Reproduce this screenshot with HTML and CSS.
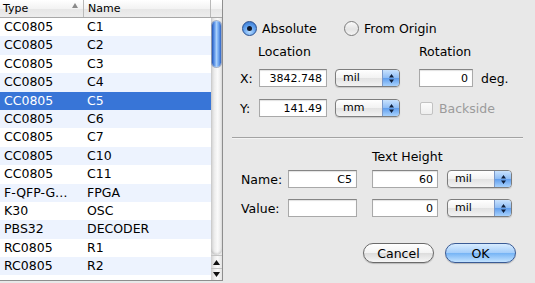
FILE: index.html
```html
<!DOCTYPE html>
<html>
	<head>
		<meta charset="UTF-8">
		<title>Part Properties</title>
		<link rel="stylesheet" href="styles.css">
	</head>
	<body>
		<div class="window">
			<div class="list">
				<div class="list-head">
					<div class="head-type">Type<span class="sort"></span></div>
					<div class="head-name">Name</div>
					<div class="head-corner"></div>
				</div>
				<div class="list-main">
					<div class="rows">
						<div class="row"><span class="c-type">CC0805</span><span class="c-name">C1</span></div>
						<div class="row alt"><span class="c-type">CC0805</span><span class="c-name">C2</span></div>
						<div class="row"><span class="c-type">CC0805</span><span class="c-name">C3</span></div>
						<div class="row alt"><span class="c-type">CC0805</span><span class="c-name">C4</span></div>
						<div class="row sel"><span class="c-type">CC0805</span><span class="c-name">C5</span></div>
						<div class="row alt"><span class="c-type">CC0805</span><span class="c-name">C6</span></div>
						<div class="row"><span class="c-type">CC0805</span><span class="c-name">C7</span></div>
						<div class="row alt"><span class="c-type">CC0805</span><span class="c-name">C10</span></div>
						<div class="row"><span class="c-type">CC0805</span><span class="c-name">C11</span></div>
						<div class="row alt"><span class="c-type">F-QFP-G…</span><span class="c-name">FPGA</span></div>
						<div class="row"><span class="c-type">K30</span><span class="c-name">OSC</span></div>
						<div class="row alt"><span class="c-type">PBS32</span><span class="c-name">DECODER</span></div>
						<div class="row"><span class="c-type">RC0805</span><span class="c-name">R1</span></div>
						<div class="row alt"><span class="c-type">RC0805</span><span class="c-name">R2</span></div>
					</div>
					<div class="vscroll">
						<div class="track"><div class="thumb"></div></div>
						<div class="arrow">
							<svg width="7" height="5" viewBox="0 0 7 5"><path d="M3.5 0L7 5H0z" fill="#111"/></svg>
						</div>
						<div class="arrow down">
							<svg width="7" height="5" viewBox="0 0 7 5"><path d="M0 0H7L3.5 5z" fill="#111"/></svg>
						</div>
					</div>
				</div>
			</div>

			<div class="panel">
				<div class="radios">
					<label class="option"><span class="radio on"></span>Absolute</label>
					<label class="option"><span class="radio"></span>From Origin</label>
				</div>

				<div class="titles">
					<span class="t-location">Location</span>
					<span>Rotation</span>
				</div>

				<div class="line line-x">
					<span class="axis">X:</span>
					<input class="field f-loc" type="text" value="3842.748">
					<div class="popup"><span class="popup-label">mil</span><span class="popup-arrows">
						<svg width="7" height="11" viewBox="0 0 7 11"><path d="M3.5 1L6 4.5H1z M1 6.5H6L3.5 10z" fill="#10203c"/></svg>
					</span></div>
					<input class="field f-rot" type="text" value="0">
					<span class="unit">deg.</span>
				</div>

				<div class="line line-y">
					<span class="axis">Y:</span>
					<input class="field f-loc" type="text" value="141.49">
					<div class="popup"><span class="popup-label">mm</span><span class="popup-arrows">
						<svg width="7" height="11" viewBox="0 0 7 11"><path d="M3.5 1L6 4.5H1z M1 6.5H6L3.5 10z" fill="#10203c"/></svg>
					</span></div>
					<label class="check"><span class="box"></span>Backside</label>
				</div>

				<div class="separator"></div>

				<div class="th-title">Text Height</div>

				<div class="line line-name">
					<span class="tag">Name:</span>
					<input class="field f-text" type="text" value="C5">
					<input class="field f-height" type="text" value="60">
					<div class="popup"><span class="popup-label">mil</span><span class="popup-arrows">
						<svg width="7" height="11" viewBox="0 0 7 11"><path d="M3.5 1L6 4.5H1z M1 6.5H6L3.5 10z" fill="#10203c"/></svg>
					</span></div>
				</div>

				<div class="line line-value">
					<span class="tag">Value:</span>
					<input class="field f-text" type="text" value="">
					<input class="field f-height" type="text" value="0">
					<div class="popup"><span class="popup-label">mil</span><span class="popup-arrows">
						<svg width="7" height="11" viewBox="0 0 7 11"><path d="M3.5 1L6 4.5H1z M1 6.5H6L3.5 10z" fill="#10203c"/></svg>
					</span></div>
				</div>

				<div class="buttons">
					<button class="btn">Cancel</button>
					<button class="btn ok">OK</button>
				</div>
			</div>
		</div>
	</body>
</html>
```

FILE: styles.css
```css
body {
	margin: 0;
	background-color: #e8e8e8;
	font-family: "DejaVu Sans", sans-serif;
	font-size: 12.5px;
	color: #000;
	overflow: hidden;
}
.window {
	display: flex;
	width: 535px;
	height: 283px;
}

/* parts list */
.list {
	width: 222px;
	height: 280px;
	border-right: 1px solid #8e8e8e;
	border-bottom: 1px solid #8e8e8e;
	background-color: #fff;
	display: flex;
	flex-direction: column;
	overflow: hidden;
	flex-shrink: 0;
}
.list-head {
	display: flex;
	height: 17px;
	border-bottom: 1px solid #a8a8a8;
	background: linear-gradient(#ffffff, #f3f3f3 50%, #e6e6e6 51%, #ededed);
	font-size: 11px;
	line-height: 17px;
}
.head-type,.head-name {
	border-right: 1px solid #b9b9b9;
	box-sizing: border-box;
	padding-left: 3px;
}
.head-type {
	width: 84px;
	display: flex;
	align-items: center;
	justify-content: space-between;
	padding-right: 5px;
}
.head-name {
	width: 127px;
	padding-left: 4px;
}
.head-corner {
	flex: 1;
}
.sort {
	width: 0;
	height: 0;
	border-left: 3px solid transparent;
	border-right: 3px solid transparent;
	border-bottom: 5px solid #8a8a8a;
	margin-bottom: 6px;
}
.list-main {
	display: flex;
	flex: 1;
	overflow: hidden;
}
.rows {
	width: 211px;
}
.row {
	display: flex;
	height: 18.4px;
	line-height: 18.4px;
	white-space: nowrap;
}
.row.alt {
	background-color: #edf3fe;
}
.row.sel {
	background-color: #3875d7;
	color: #fff;
}
.c-type {
	width: 84px;
	padding-left: 4px;
	box-sizing: border-box;
}
.c-name {
	padding-left: 3px;
}
.vscroll {
	flex: 1;
	display: flex;
	flex-direction: column;
	background: linear-gradient(to right, #cfcfcf, #ececec 30%, #fafafa 60%, #e4e4e4);
}
.track {
	flex: 1;
	padding-top: 3px;
	border-radius: 0 0 6px 6px;
	box-shadow: inset 0 -2px 2px rgba(0,0,0,0.12);
}
.thumb {
	width: 9px;
	height: 46px;
	margin-left: 1px;
	border-radius: 5px;
	background: linear-gradient(to right, #2457b8, #5b93e8 25%, #a9d0fb 50%, #6aa2ee 75%, #2d63c6);
	box-shadow: 0 0 0 1px rgba(30,60,120,0.35);
}
.arrow {
	height: 12px;
	display: flex;
	align-items: center;
	justify-content: center;
	border-top: 1px solid #c4c4c4;
}
.arrow.down {
	height: 11px;
}

/* right side */
.panel {
	flex: 1;
	display: flex;
	flex-direction: column;
}
.radios {
	display: flex;
	margin: 21px 0 0 19px;
	height: 15px;
}
.option {
	display: flex;
	align-items: center;
	gap: 5px;
	width: 102px;
	white-space: nowrap;
}
.radio {
	width: 13px;
	height: 13px;
	border-radius: 50%;
	border: 1px solid #7b7b7b;
	background: linear-gradient(#fafafa, #e4e4e4 55%, #f4f4f4);
	display: flex;
	align-items: center;
	justify-content: center;
	flex-shrink: 0;
}
.radio.on {
	border-color: #2a4f8e;
	background: radial-gradient(circle at 50% 75%, #b7dcff, #5b9ceb 55%, #2f6dc6);
}
.radio.on::after {
	content: "";
	width: 5px;
	height: 5px;
	border-radius: 50%;
	background-color: #10182a;
}
.titles {
	display: flex;
	margin: 8px 0 0 35px;
	height: 16px;
	line-height: 16px;
}
.t-location {
	width: 161px;
}
.line {
	display: flex;
	align-items: center;
	height: 18px;
}
.line-x {
	margin: 9px 0 0 17px;
}
.line-y {
	margin: 12px 0 0 17px;
}
.axis {
	width: 19px;
}
.field {
	box-sizing: border-box;
	height: 18px;
	margin: 0;
	padding: 0 4px 0 0;
	border: 1px solid #a9a9a9;
	border-top-color: #858585;
	box-shadow: inset 0 1px 1px rgba(0,0,0,0.12);
	background-color: #fff;
	font-family: "DejaVu Sans", sans-serif;
	font-size: 11px;
	text-align: right;
	color: #000;
	outline: none;
}
.f-loc {
	width: 68px;
	margin-right: 8px;
}
.f-rot {
	width: 54px;
	margin-left: 19px;
}
.unit {
	margin-left: 8px;
}
.popup {
	display: flex;
	width: 65px;
	height: 18px;
	box-sizing: border-box;
	border: 1px solid #7d7d7d;
	border-radius: 4px;
	background: linear-gradient(#ffffff, #f2f2f2 50%, #e2e2e2 51%, #f3f3f3);
	box-shadow: 0 1px 1px rgba(0,0,0,0.15);
	overflow: hidden;
	font-size: 11px;
	line-height: 16px;
}
.popup-label {
	flex: 1;
	padding-left: 7px;
}
.popup-arrows {
	width: 16px;
	display: flex;
	align-items: center;
	justify-content: center;
	border-left: 1px solid #7b98c8;
	background: linear-gradient(#c9e2fd, #8dbcf5 50%, #5f9ded 51%, #a8d2fd);
}
.check {
	display: flex;
	align-items: center;
	gap: 6px;
	margin-left: 20px;
	color: #9b9b9b;
}
.box {
	width: 11px;
	height: 11px;
	border: 1px solid #c2c2c2;
	border-radius: 2px;
	background: linear-gradient(#fbfbfb, #eeeeee);
}
.separator {
	margin: 20px 12px 0 9px;
	height: 1px;
	background-color: #a3a3a3;
	border-bottom: 1px solid #f4f4f4;
}
.th-title {
	margin: 10px 0 0 149px;
	height: 16px;
	line-height: 16px;
}
.line-name {
	margin: 5px 0 0 18px;
}
.line-value {
	margin: 11px 0 0 18px;
}
.tag {
	width: 47px;
}
.f-text {
	width: 69px;
	margin-right: 15px;
}
.f-height {
	width: 66px;
	margin-right: 9px;
}
.buttons {
	display: flex;
	gap: 11px;
	margin: 26px 0 0 140px;
}
.btn {
	width: 71px;
	height: 20px;
	padding: 0;
	border: 1px solid #6a6a6a;
	border-radius: 10px;
	background: linear-gradient(#ffffff, #f3f3f3 50%, #dcdcdc 51%, #f6f6f6);
	box-shadow: 0 1px 1px rgba(0,0,0,0.2);
	font-family: "DejaVu Sans", sans-serif;
	font-size: 12.5px;
	color: #000;
}
.btn.ok {
	border-color: #3a5b95;
	background: linear-gradient(#d8ecff, #a3cdfa 50%, #75b3f5 51%, #c3e3ff);
}
```
